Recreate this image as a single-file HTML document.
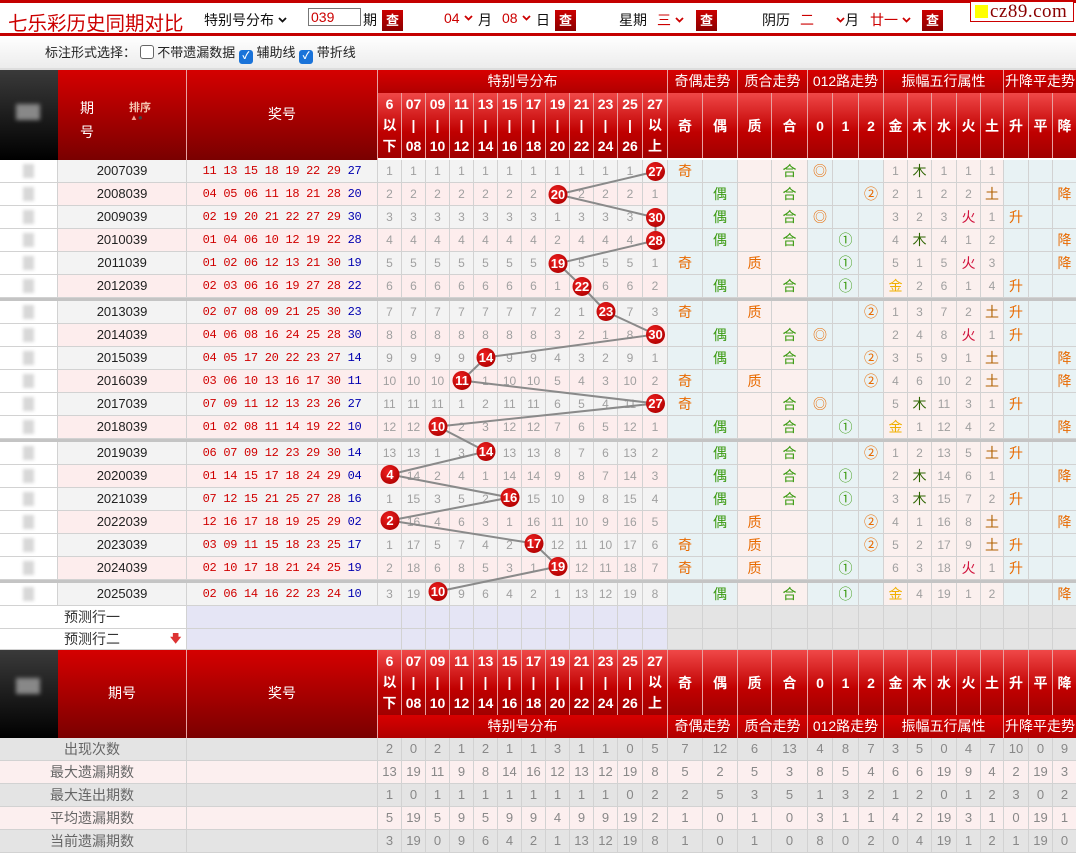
<!DOCTYPE html>
<html><head><meta charset="utf-8">
<style>
*{margin:0;padding:0}
body{width:1076px;height:855px;position:relative;overflow:hidden;background:#fff;font-family:"Liberation Sans","Noto Sans CJK SC",sans-serif}
.abs{position:absolute}
#top{left:0;top:0;width:1076px;height:36px;border-top:3px solid #c40000;border-bottom:3px solid #c40000;box-sizing:border-box;background:#fff}
#top .t{position:absolute;font-size:14px;color:#111;top:7px;white-space:nowrap}
#top .rd{color:#c00}
.cha{position:absolute;top:7px;width:21px;height:21px;background:linear-gradient(#c00,#8a0000);color:#fff;font-size:13px;font-weight:bold;text-align:center;line-height:21px}
.chev{display:inline-block;width:9px;height:6px;margin-left:4px;vertical-align:2px}
#bar2{left:0;top:36px;width:1076px;height:32px;background:linear-gradient(#fff,#ececec)}
.cb{display:inline-block;width:12px;height:12px;border:1px solid #666;border-radius:3px;background:#fff;vertical-align:-2px}
.cb.on{background:#1a73d9;border-color:#1a73d9;color:#fff;font-size:10px;line-height:12px;text-align:center;font-weight:bold}
.r{position:absolute;left:0;width:1076px;display:flex;height:23px;box-sizing:border-box;border-bottom:1px solid #d2d2d2}
.r>i{font-style:normal;box-sizing:border-box;border-right:1px solid #d2d2d2;text-align:center;line-height:22px;font-size:12px;color:#a0a0a0;flex:none;white-space:nowrap;overflow:visible}
.r>i:nth-child(1){width:58px}
.r>i:nth-child(2){width:129px;color:#222;font-size:13px}
.r>i:nth-child(3){width:191px}
.r>i:nth-child(n+4){width:24px}
.r>i:nth-child(14),.r>i:nth-child(15){width:25px}
.r>i:nth-child(16),.r>i:nth-child(17){width:35px}
.r>i:nth-child(18){width:34px}
.r>i:nth-child(19){width:36px}
.r>i:nth-child(20),.r>i:nth-child(22){width:25px}
.r>i:nth-child(21){width:26px}
.r>i:nth-child(23),.r>i:nth-child(24),.r>i:nth-child(26){width:24px}
.r>i:nth-child(25){width:25px}
.r>i:nth-child(27){width:23px}
.r>i:nth-child(28){width:25px}
.r>i:nth-child(29){width:24px}
.r>i:nth-child(30){width:23px;border-right:none}
.o>i{background:#f3f3f3}
.e>i{background:#fdeded}
.d>i:nth-child(16),.d>i:nth-child(17),.d>i:nth-child(20),.d>i:nth-child(21),.d>i:nth-child(22),.d>i:nth-child(28),.d>i:nth-child(29),.d>i:nth-child(30){background:#e8f2f4}
.d>i:nth-child(18),.d>i:nth-child(19),.d>i:nth-child(n+23):nth-child(-n+27){background:#fbf0ee}
.d>i:nth-child(1){background:#fff;position:relative}
.d>i:nth-child(1)::after{content:"";position:absolute;left:23px;top:4px;width:11px;height:14px;background:#d8d8d8;filter:blur(1.5px)}
.s{border-top:3px solid #c4c4c4;height:26px}
.j{font-family:"Liberation Mono",monospace;font-size:12px!important;color:#d00000!important;letter-spacing:-0.3px}
.j span{color:#0000b0}
.r>i.or{color:#e86a00;font-size:14px}
.r>i.gr{color:#3a9a10;font-size:14px}
.r>i.jin{color:#f0b000;font-size:14px}
.r>i.mu{color:#2d6400;font-size:14px}
.r>i.huo{color:#d0103a;font-size:14px}
.r>i.tu{color:#b06000;font-size:14px}
.p>i{background:#e4e4e4}
.p>i:nth-child(n+3):nth-child(-n+15){background:#e5e5f5}
.p>i:nth-child(1),.p>i:nth-child(2){background:#fff}
.p>i:nth-child(1),.t>i:nth-child(1){border-right:none}
.r>i.lb{color:#333;font-size:14px}
.r>i.lb span{position:relative;left:-30px}
.t>i{font-size:13px;color:#888}
.ga>i{background:#e4e4e4}
.pa>i{background:#fcefef}
.r>i.sl{color:#666;font-size:14px}
.hbig{background:linear-gradient(#d50000,#7a0000);color:#fff;font-size:14px;text-align:center;box-sizing:border-box;border-right:1px solid #e7a0a0}
.hgrp{display:flex;background:linear-gradient(#d80000,#b00000);height:23px}
.hgrp>i{font-style:normal;color:#fff;font-size:14px;text-align:center;line-height:23px;box-sizing:border-box;border-right:1px solid #e8a0a0;flex:none}
.hsub{display:flex;height:65px}
.hsub>i{font-style:normal;color:#fff;font-size:14px;font-weight:bold;text-align:center;line-height:21px;padding-top:1px;box-sizing:border-box;border-right:1px solid #e8a0a0;flex:none;background:linear-gradient(#f04848,#c00000 60%,#a00000)}
.hsub>i.c{line-height:64px}
.blk{background:linear-gradient(#3a3a3a,#000);}
</style></head><body>

<div id="top" class="abs">
  <div class="t" style="left:8px;top:4px;font-size:19.5px;color:#c00">七乐彩历史同期对比</div>
  <div class="t" style="left:204px">特别号分布<svg class="chev" viewBox="0 0 9 6"><polyline points="1,1 4.5,4.5 8,1" fill="none" stroke="#111" stroke-width="1.8"/></svg></div>
  <div class="abs" style="left:308px;top:5px;width:53px;height:18px;border:1px solid #777;box-sizing:border-box;color:#c00;font-size:14px;line-height:16px;padding-left:2px">039</div>
  <div class="t" style="left:363px">期</div>
  <div class="cha" style="left:382px">查</div>
  <div class="t rd" style="left:444px">04<svg class="chev" viewBox="0 0 9 6"><polyline points="1,1 4.5,4.5 8,1" fill="none" stroke="#c00" stroke-width="1.8"/></svg></div>
  <div class="t" style="left:478px">月</div>
  <div class="t rd" style="left:502px">08<svg class="chev" viewBox="0 0 9 6"><polyline points="1,1 4.5,4.5 8,1" fill="none" stroke="#c00" stroke-width="1.8"/></svg></div>
  <div class="t" style="left:536px">日</div>
  <div class="cha" style="left:555px">查</div>
  <div class="t" style="left:619px">星期</div>
  <div class="t rd" style="left:657px">三<svg class="chev" viewBox="0 0 9 6"><polyline points="1,1 4.5,4.5 8,1" fill="none" stroke="#c00" stroke-width="1.8"/></svg></div>
  <div class="cha" style="left:696px">查</div>
  <div class="t" style="left:762px">阴历</div>
  <div class="t rd" style="left:800px">二</div>
  <div class="t" style="left:832px"><svg class="chev" viewBox="0 0 9 6"><polyline points="1,1 4.5,4.5 8,1" fill="none" stroke="#c00" stroke-width="1.8"/></svg>月</div>
  <div class="t rd" style="left:870px">廿一<svg class="chev" viewBox="0 0 9 6"><polyline points="1,1 4.5,4.5 8,1" fill="none" stroke="#c00" stroke-width="1.8"/></svg></div>
  <div class="cha" style="left:922px">查</div>
</div>
<div class="abs" style="left:970px;top:1px;width:104px;height:21px;border:1px solid #c00;background:#fff;box-sizing:border-box">
  <div class="abs" style="left:4px;top:3px;width:13px;height:13px;background:#ff0"></div>
  <div class="abs" style="left:19px;top:-1px;font-family:'Liberation Serif',serif;font-size:19px;color:#8a0000;letter-spacing:0.5px">cz89.com</div>
</div>

<div id="bar2" class="abs">
  <div class="abs" style="left:45px;top:6px;font-size:13px;color:#222;white-space:nowrap">标注形式选择： <span class="cb"></span> 不带遗漏数据 <span class="cb on">✓</span> 辅助线 <span class="cb on">✓</span> 带折线</div>
</div>

<!-- top header -->
<div class="abs" style="left:0;top:68px;width:1076px;height:2px;background:#ddd"></div>
<div class="abs blk" style="left:0;top:70px;width:58px;height:90px"><div class="abs" style="left:16px;top:34px;width:24px;height:16px;background:#888;filter:blur(2px)"></div></div>
<div class="abs hbig" style="left:58px;top:70px;width:129px;height:90px">
  <div class="abs" style="left:22px;top:26px;line-height:24px">期<br>号</div>
  <div class="abs" style="left:71px;top:29px;font-size:11px;font-weight:bold;color:#f5c4b0">排序</div>
  <div class="abs" style="left:72px;top:43px;font-size:8px;color:#f5a090">▲<span style="color:#444">●</span></div>
</div>
<div class="abs hbig" style="left:187px;top:70px;width:191px;height:90px;line-height:88px">奖号</div>
<div class="abs hgrp" style="left:378px;top:70px;width:698px">
  <i style="width:290px">特别号分布</i><i style="width:70px">奇偶走势</i><i style="width:70px">质合走势</i><i style="width:76px">012路走势</i><i style="width:120px">振幅五行属性</i><i style="width:72px;border-right:none">升降平走势</i>
</div>
<div class="abs hsub" style="left:378px;top:93px;width:698px">
  <i style="width:24px">6<br>以<br>下</i><i style="width:24px">07<br>|<br>08</i><i style="width:24px">09<br>|<br>10</i><i style="width:24px">11<br>|<br>12</i><i style="width:24px">13<br>|<br>14</i><i style="width:24px">15<br>|<br>16</i><i style="width:24px">17<br>|<br>18</i><i style="width:24px">19<br>|<br>20</i><i style="width:24px">21<br>|<br>22</i><i style="width:24px">23<br>|<br>24</i><i style="width:25px">25<br>|<br>26</i><i style="width:25px">27<br>以<br>上</i>
  <i class="c" style="width:35px">奇</i><i class="c" style="width:35px">偶</i><i class="c" style="width:34px">质</i><i class="c" style="width:36px">合</i><i class="c" style="width:25px">0</i><i class="c" style="width:26px">1</i><i class="c" style="width:25px">2</i><i class="c" style="width:24px">金</i><i class="c" style="width:24px">木</i><i class="c" style="width:25px">水</i><i class="c" style="width:24px">火</i><i class="c" style="width:23px">土</i><i class="c" style="width:25px">升</i><i class="c" style="width:24px">平</i><i class="c" style="width:23px;border-right:none">降</i>
</div>

<!-- data rows -->
<div class="r d o" style="top:160px"><i></i><i>2007039</i><i class="j">11 13 15 18 19 22 29 <span>27</span></i><i>1</i><i>1</i><i>1</i><i>1</i><i>1</i><i>1</i><i>1</i><i>1</i><i>1</i><i>1</i><i>1</i><i></i><i class="or">奇</i><i></i><i></i><i class="gr">合</i><i class="or">◎</i><i></i><i></i><i>1</i><i class="mu">木</i><i>1</i><i>1</i><i>1</i><i></i><i></i><i></i></div>
<div class="r d e" style="top:183px"><i></i><i>2008039</i><i class="j">04 05 06 11 18 21 28 <span>20</span></i><i>2</i><i>2</i><i>2</i><i>2</i><i>2</i><i>2</i><i>2</i><i></i><i>2</i><i>2</i><i>2</i><i>1</i><i></i><i class="gr">偶</i><i></i><i class="gr">合</i><i></i><i></i><i class="or">②</i><i>2</i><i>1</i><i>2</i><i>2</i><i class="tu">土</i><i></i><i></i><i class="or">降</i></div>
<div class="r d o" style="top:206px"><i></i><i>2009039</i><i class="j">02 19 20 21 22 27 29 <span>30</span></i><i>3</i><i>3</i><i>3</i><i>3</i><i>3</i><i>3</i><i>3</i><i>1</i><i>3</i><i>3</i><i>3</i><i></i><i></i><i class="gr">偶</i><i></i><i class="gr">合</i><i class="or">◎</i><i></i><i></i><i>3</i><i>2</i><i>3</i><i class="huo">火</i><i>1</i><i class="or">升</i><i></i><i></i></div>
<div class="r d e" style="top:229px"><i></i><i>2010039</i><i class="j">01 04 06 10 12 19 22 <span>28</span></i><i>4</i><i>4</i><i>4</i><i>4</i><i>4</i><i>4</i><i>4</i><i>2</i><i>4</i><i>4</i><i>4</i><i></i><i></i><i class="gr">偶</i><i></i><i class="gr">合</i><i></i><i class="gr">①</i><i></i><i>4</i><i class="mu">木</i><i>4</i><i>1</i><i>2</i><i></i><i></i><i class="or">降</i></div>
<div class="r d o" style="top:252px"><i></i><i>2011039</i><i class="j">01 02 06 12 13 21 30 <span>19</span></i><i>5</i><i>5</i><i>5</i><i>5</i><i>5</i><i>5</i><i>5</i><i></i><i>5</i><i>5</i><i>5</i><i>1</i><i class="or">奇</i><i></i><i class="or">质</i><i></i><i></i><i class="gr">①</i><i></i><i>5</i><i>1</i><i>5</i><i class="huo">火</i><i>3</i><i></i><i></i><i class="or">降</i></div>
<div class="r d e" style="top:275px"><i></i><i>2012039</i><i class="j">02 03 06 16 19 27 28 <span>22</span></i><i>6</i><i>6</i><i>6</i><i>6</i><i>6</i><i>6</i><i>6</i><i>1</i><i></i><i>6</i><i>6</i><i>2</i><i></i><i class="gr">偶</i><i></i><i class="gr">合</i><i></i><i class="gr">①</i><i></i><i class="jin">金</i><i>2</i><i>6</i><i>1</i><i>4</i><i class="or">升</i><i></i><i></i></div>
<div class="r d o s" style="top:298px"><i></i><i>2013039</i><i class="j">02 07 08 09 21 25 30 <span>23</span></i><i>7</i><i>7</i><i>7</i><i>7</i><i>7</i><i>7</i><i>7</i><i>2</i><i>1</i><i></i><i>7</i><i>3</i><i class="or">奇</i><i></i><i class="or">质</i><i></i><i></i><i></i><i class="or">②</i><i>1</i><i>3</i><i>7</i><i>2</i><i class="tu">土</i><i class="or">升</i><i></i><i></i></div>
<div class="r d e" style="top:324px"><i></i><i>2014039</i><i class="j">04 06 08 16 24 25 28 <span>30</span></i><i>8</i><i>8</i><i>8</i><i>8</i><i>8</i><i>8</i><i>8</i><i>3</i><i>2</i><i>1</i><i>8</i><i></i><i></i><i class="gr">偶</i><i></i><i class="gr">合</i><i class="or">◎</i><i></i><i></i><i>2</i><i>4</i><i>8</i><i class="huo">火</i><i>1</i><i class="or">升</i><i></i><i></i></div>
<div class="r d o" style="top:347px"><i></i><i>2015039</i><i class="j">04 05 17 20 22 23 27 <span>14</span></i><i>9</i><i>9</i><i>9</i><i>9</i><i></i><i>9</i><i>9</i><i>4</i><i>3</i><i>2</i><i>9</i><i>1</i><i></i><i class="gr">偶</i><i></i><i class="gr">合</i><i></i><i></i><i class="or">②</i><i>3</i><i>5</i><i>9</i><i>1</i><i class="tu">土</i><i></i><i></i><i class="or">降</i></div>
<div class="r d e" style="top:370px"><i></i><i>2016039</i><i class="j">03 06 10 13 16 17 30 <span>11</span></i><i>10</i><i>10</i><i>10</i><i></i><i>1</i><i>10</i><i>10</i><i>5</i><i>4</i><i>3</i><i>10</i><i>2</i><i class="or">奇</i><i></i><i class="or">质</i><i></i><i></i><i></i><i class="or">②</i><i>4</i><i>6</i><i>10</i><i>2</i><i class="tu">土</i><i></i><i></i><i class="or">降</i></div>
<div class="r d o" style="top:393px"><i></i><i>2017039</i><i class="j">07 09 11 12 13 23 26 <span>27</span></i><i>11</i><i>11</i><i>11</i><i>1</i><i>2</i><i>11</i><i>11</i><i>6</i><i>5</i><i>4</i><i>11</i><i></i><i class="or">奇</i><i></i><i></i><i class="gr">合</i><i class="or">◎</i><i></i><i></i><i>5</i><i class="mu">木</i><i>11</i><i>3</i><i>1</i><i class="or">升</i><i></i><i></i></div>
<div class="r d e" style="top:416px"><i></i><i>2018039</i><i class="j">01 02 08 11 14 19 22 <span>10</span></i><i>12</i><i>12</i><i></i><i>2</i><i>3</i><i>12</i><i>12</i><i>7</i><i>6</i><i>5</i><i>12</i><i>1</i><i></i><i class="gr">偶</i><i></i><i class="gr">合</i><i></i><i class="gr">①</i><i></i><i class="jin">金</i><i>1</i><i>12</i><i>4</i><i>2</i><i></i><i></i><i class="or">降</i></div>
<div class="r d o s" style="top:439px"><i></i><i>2019039</i><i class="j">06 07 09 12 23 29 30 <span>14</span></i><i>13</i><i>13</i><i>1</i><i>3</i><i></i><i>13</i><i>13</i><i>8</i><i>7</i><i>6</i><i>13</i><i>2</i><i></i><i class="gr">偶</i><i></i><i class="gr">合</i><i></i><i></i><i class="or">②</i><i>1</i><i>2</i><i>13</i><i>5</i><i class="tu">土</i><i class="or">升</i><i></i><i></i></div>
<div class="r d e" style="top:465px"><i></i><i>2020039</i><i class="j">01 14 15 17 18 24 29 <span>04</span></i><i></i><i>14</i><i>2</i><i>4</i><i>1</i><i>14</i><i>14</i><i>9</i><i>8</i><i>7</i><i>14</i><i>3</i><i></i><i class="gr">偶</i><i></i><i class="gr">合</i><i></i><i class="gr">①</i><i></i><i>2</i><i class="mu">木</i><i>14</i><i>6</i><i>1</i><i></i><i></i><i class="or">降</i></div>
<div class="r d o" style="top:488px"><i></i><i>2021039</i><i class="j">07 12 15 21 25 27 28 <span>16</span></i><i>1</i><i>15</i><i>3</i><i>5</i><i>2</i><i></i><i>15</i><i>10</i><i>9</i><i>8</i><i>15</i><i>4</i><i></i><i class="gr">偶</i><i></i><i class="gr">合</i><i></i><i class="gr">①</i><i></i><i>3</i><i class="mu">木</i><i>15</i><i>7</i><i>2</i><i class="or">升</i><i></i><i></i></div>
<div class="r d e" style="top:511px"><i></i><i>2022039</i><i class="j">12 16 17 18 19 25 29 <span>02</span></i><i></i><i>16</i><i>4</i><i>6</i><i>3</i><i>1</i><i>16</i><i>11</i><i>10</i><i>9</i><i>16</i><i>5</i><i></i><i class="gr">偶</i><i class="or">质</i><i></i><i></i><i></i><i class="or">②</i><i>4</i><i>1</i><i>16</i><i>8</i><i class="tu">土</i><i></i><i></i><i class="or">降</i></div>
<div class="r d o" style="top:534px"><i></i><i>2023039</i><i class="j">03 09 11 15 18 23 25 <span>17</span></i><i>1</i><i>17</i><i>5</i><i>7</i><i>4</i><i>2</i><i></i><i>12</i><i>11</i><i>10</i><i>17</i><i>6</i><i class="or">奇</i><i></i><i class="or">质</i><i></i><i></i><i></i><i class="or">②</i><i>5</i><i>2</i><i>17</i><i>9</i><i class="tu">土</i><i class="or">升</i><i></i><i></i></div>
<div class="r d e" style="top:557px"><i></i><i>2024039</i><i class="j">02 10 17 18 21 24 25 <span>19</span></i><i>2</i><i>18</i><i>6</i><i>8</i><i>5</i><i>3</i><i>1</i><i></i><i>12</i><i>11</i><i>18</i><i>7</i><i class="or">奇</i><i></i><i class="or">质</i><i></i><i></i><i class="gr">①</i><i></i><i>6</i><i>3</i><i>18</i><i class="huo">火</i><i>1</i><i class="or">升</i><i></i><i></i></div>
<div class="r d o s" style="top:580px"><i></i><i>2025039</i><i class="j">02 06 14 16 22 23 24 <span>10</span></i><i>3</i><i>19</i><i></i><i>9</i><i>6</i><i>4</i><i>2</i><i>1</i><i>13</i><i>12</i><i>19</i><i>8</i><i></i><i class="gr">偶</i><i></i><i class="gr">合</i><i></i><i class="gr">①</i><i></i><i class="jin">金</i><i>4</i><i>19</i><i>1</i><i>2</i><i></i><i></i><i class="or">降</i></div>

<!-- predict rows -->
<div class="r p" style="top:606px"><i></i><i class="lb"><span>预测行一</span></i><i style="border-right:none"></i><i></i><i></i><i></i><i></i><i></i><i></i><i></i><i></i><i></i><i></i><i></i><i></i><i></i><i></i><i></i><i></i><i></i><i></i><i></i><i></i><i></i><i></i><i></i><i></i><i></i><i></i><i></i></div>
<div class="r p" style="top:629px;height:21px"><i></i><i class="lb" style="line-height:20px"><span>预测行二</span><b style="position:absolute;margin-left:20px;color:#d33;font-size:11px">🡇</b></i><i style="border-right:none"></i><i></i><i></i><i></i><i></i><i></i><i></i><i></i><i></i><i></i><i></i><i></i><i></i><i></i><i></i><i></i><i></i><i></i><i></i><i></i><i></i><i></i><i></i><i></i><i></i><i></i><i></i><i></i></div>

<!-- bottom header -->
<div class="abs blk" style="left:0;top:650px;width:58px;height:88px"><div class="abs" style="left:16px;top:28px;width:24px;height:16px;background:#888;filter:blur(2px)"></div></div>
<div class="abs hbig" style="left:58px;top:650px;width:129px;height:88px;line-height:86px">期号</div>
<div class="abs hbig" style="left:187px;top:650px;width:191px;height:88px;line-height:86px">奖号</div>
<div class="abs hsub" style="left:378px;top:650px;width:698px">
  <i style="width:24px">6<br>以<br>下</i><i style="width:24px">07<br>|<br>08</i><i style="width:24px">09<br>|<br>10</i><i style="width:24px">11<br>|<br>12</i><i style="width:24px">13<br>|<br>14</i><i style="width:24px">15<br>|<br>16</i><i style="width:24px">17<br>|<br>18</i><i style="width:24px">19<br>|<br>20</i><i style="width:24px">21<br>|<br>22</i><i style="width:24px">23<br>|<br>24</i><i style="width:25px">25<br>|<br>26</i><i style="width:25px">27<br>以<br>上</i>
  <i class="c" style="width:35px">奇</i><i class="c" style="width:35px">偶</i><i class="c" style="width:34px">质</i><i class="c" style="width:36px">合</i><i class="c" style="width:25px">0</i><i class="c" style="width:26px">1</i><i class="c" style="width:25px">2</i><i class="c" style="width:24px">金</i><i class="c" style="width:24px">木</i><i class="c" style="width:25px">水</i><i class="c" style="width:24px">火</i><i class="c" style="width:23px">土</i><i class="c" style="width:25px">升</i><i class="c" style="width:24px">平</i><i class="c" style="width:23px;border-right:none">降</i>
</div>
<div class="abs hgrp" style="left:378px;top:715px;width:698px">
  <i style="width:290px">特别号分布</i><i style="width:70px">奇偶走势</i><i style="width:70px">质合走势</i><i style="width:76px">012路走势</i><i style="width:120px">振幅五行属性</i><i style="width:72px;border-right:none">升降平走势</i>
</div>

<!-- stats rows -->
<div class="r t ga" style="top:738px"><i></i><i class="sl"><span style="position:relative;left:-30px">出现次数</span></i><i></i><i>2</i><i>0</i><i>2</i><i>1</i><i>2</i><i>1</i><i>1</i><i>3</i><i>1</i><i>1</i><i>0</i><i>5</i><i>7</i><i>12</i><i>6</i><i>13</i><i>4</i><i>8</i><i>7</i><i>3</i><i>5</i><i>0</i><i>4</i><i>7</i><i>10</i><i>0</i><i>9</i></div>
<div class="r t pa" style="top:761px"><i></i><i class="sl"><span style="position:relative;left:-30px">最大遗漏期数</span></i><i></i><i>13</i><i>19</i><i>11</i><i>9</i><i>8</i><i>14</i><i>16</i><i>12</i><i>13</i><i>12</i><i>19</i><i>8</i><i>5</i><i>2</i><i>5</i><i>3</i><i>8</i><i>5</i><i>4</i><i>6</i><i>6</i><i>19</i><i>9</i><i>4</i><i>2</i><i>19</i><i>3</i></div>
<div class="r t ga" style="top:784px"><i></i><i class="sl"><span style="position:relative;left:-30px">最大连出期数</span></i><i></i><i>1</i><i>0</i><i>1</i><i>1</i><i>1</i><i>1</i><i>1</i><i>1</i><i>1</i><i>1</i><i>0</i><i>2</i><i>2</i><i>5</i><i>3</i><i>5</i><i>1</i><i>3</i><i>2</i><i>1</i><i>2</i><i>0</i><i>1</i><i>2</i><i>3</i><i>0</i><i>2</i></div>
<div class="r t pa" style="top:807px"><i></i><i class="sl"><span style="position:relative;left:-30px">平均遗漏期数</span></i><i></i><i>5</i><i>19</i><i>5</i><i>9</i><i>5</i><i>9</i><i>9</i><i>4</i><i>9</i><i>9</i><i>19</i><i>2</i><i>1</i><i>0</i><i>1</i><i>0</i><i>3</i><i>1</i><i>1</i><i>4</i><i>2</i><i>19</i><i>3</i><i>1</i><i>0</i><i>19</i><i>1</i></div>
<div class="r t ga" style="top:830px"><i></i><i class="sl"><span style="position:relative;left:-30px">当前遗漏期数</span></i><i></i><i>3</i><i>19</i><i>0</i><i>9</i><i>6</i><i>4</i><i>2</i><i>1</i><i>13</i><i>12</i><i>19</i><i>8</i><i>1</i><i>0</i><i>1</i><i>0</i><i>8</i><i>0</i><i>2</i><i>0</i><i>4</i><i>19</i><i>1</i><i>2</i><i>1</i><i>19</i><i>0</i></div>

<svg class="abs" style="left:0;top:0;pointer-events:none" width="1076" height="855" viewBox="0 0 1076 855">
<defs><radialGradient id="bg" cx="0.4" cy="0.35" r="0.7"><stop offset="0" stop-color="#f02020"/><stop offset="1" stop-color="#b00000"/></radialGradient></defs>
<polyline fill="none" stroke="#8a8a8a" stroke-width="2" points="655.5,171.5 558,194.5 655.5,217.5 655.5,240.5 558,263.5 582,286.5 606,311.5 655.5,334.5 486,357.5 462,380.5 655.5,403.5 438,426.5 486,451.5 390,474.5 510,497.5 390,520.5 534,543.5 558,566.5 438,591.5"/>
<g font-family="Liberation Sans,sans-serif" font-size="13" font-weight="bold" fill="#fff" text-anchor="middle">
<circle cx="655.5" cy="171.5" r="9.5" fill="url(#bg)"/><text x="655.5" y="176">27</text>
<circle cx="558" cy="194.5" r="9.5" fill="url(#bg)"/><text x="558" y="199">20</text>
<circle cx="655.5" cy="217.5" r="9.5" fill="url(#bg)"/><text x="655.5" y="222">30</text>
<circle cx="655.5" cy="240.5" r="9.5" fill="url(#bg)"/><text x="655.5" y="245">28</text>
<circle cx="558" cy="263.5" r="9.5" fill="url(#bg)"/><text x="558" y="268">19</text>
<circle cx="582" cy="286.5" r="9.5" fill="url(#bg)"/><text x="582" y="291">22</text>
<circle cx="606" cy="311.5" r="9.5" fill="url(#bg)"/><text x="606" y="316">23</text>
<circle cx="655.5" cy="334.5" r="9.5" fill="url(#bg)"/><text x="655.5" y="339">30</text>
<circle cx="486" cy="357.5" r="9.5" fill="url(#bg)"/><text x="486" y="362">14</text>
<circle cx="462" cy="380.5" r="9.5" fill="url(#bg)"/><text x="462" y="385">11</text>
<circle cx="655.5" cy="403.5" r="9.5" fill="url(#bg)"/><text x="655.5" y="408">27</text>
<circle cx="438" cy="426.5" r="9.5" fill="url(#bg)"/><text x="438" y="431">10</text>
<circle cx="486" cy="451.5" r="9.5" fill="url(#bg)"/><text x="486" y="456">14</text>
<circle cx="390" cy="474.5" r="9.5" fill="url(#bg)"/><text x="390" y="479">4</text>
<circle cx="510" cy="497.5" r="9.5" fill="url(#bg)"/><text x="510" y="502">16</text>
<circle cx="390" cy="520.5" r="9.5" fill="url(#bg)"/><text x="390" y="525">2</text>
<circle cx="534" cy="543.5" r="9.5" fill="url(#bg)"/><text x="534" y="548">17</text>
<circle cx="558" cy="566.5" r="9.5" fill="url(#bg)"/><text x="558" y="571">19</text>
<circle cx="438" cy="591.5" r="9.5" fill="url(#bg)"/><text x="438" y="596">10</text>
</g>
</svg>
</body></html>
